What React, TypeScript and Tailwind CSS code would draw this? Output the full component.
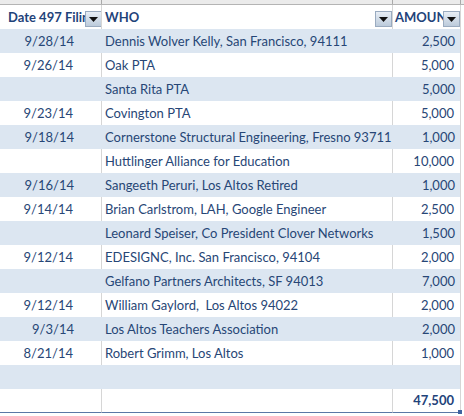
const rows = [
  { date: '9/28/14', who: 'Dennis Wolver Kelly, San Francisco, 94111', amount: '2,500' },
  { date: '9/26/14', who: 'Oak PTA', amount: '5,000' },
  { date: '', who: 'Santa Rita PTA', amount: '5,000' },
  { date: '9/23/14', who: 'Covington PTA', amount: '5,000' },
  { date: '9/18/14', who: 'Cornerstone Structural Engineering, Fresno 93711', amount: '1,000' },
  { date: '', who: 'Huttlinger Alliance for Education', amount: '10,000' },
  { date: '9/16/14', who: 'Sangeeth Peruri, Los Altos Retired', amount: '1,000' },
  { date: '9/14/14', who: 'Brian Carlstrom, LAH, Google Engineer', amount: '2,500' },
  { date: '', who: 'Leonard Speiser, Co President Clover Networks', amount: '1,500' },
  { date: '9/12/14', who: 'EDESIGNC, Inc. San Francisco, 94104', amount: '2,000' },
  { date: '', who: 'Gelfano Partners Architects, SF 94013', amount: '7,000' },
  { date: '9/12/14', who: 'William Gaylord,  Los Altos 94022', amount: '2,000' },
  { date: '9/3/14', who: 'Los Altos Teachers Association', amount: '2,000' },
  { date: '8/21/14', who: 'Robert Grimm, Los Altos', amount: '1,000' },
  { date: '', who: '', amount: '' },
];

const FilterButton = ({ className }: { className: string }) => (
  <div
    className={`absolute top-[6px] w-[17px] h-[16px] border border-[#9aabc0] bg-gradient-to-b from-[#e8eef5] to-[#bccbdb] flex items-center justify-center ${className}`}
  >
    <svg width="9" height="5" viewBox="0 0 9 5">
      <path d="M0 0h9L4.5 5z" fill="#111" />
    </svg>
  </div>
);

const App = () => {
  return (
    <div
      className="w-[464px] h-[416px] overflow-hidden bg-white text-[13px] text-[#274676]"
      style={{ fontFamily: 'Lato, "Open Sans", sans-serif' }}
    >
      {/* column header strip */}
      <div className="grid grid-cols-[102px_291px_68px_1fr] h-[5px] bg-[#ebebeb] border-b border-[#b4b4b4]">
        <div className="border-r border-[#a9a9a9]" />
        <div className="border-r border-[#a9a9a9]" />
        <div className="border-r border-[#a9a9a9]" />
        <div />
      </div>

      {/* table header */}
      <div className="grid grid-cols-[102px_291px_68px_1fr] h-[24px] font-bold text-[#1f437a]">
        <div className="relative border-r border-[#d6d6d6] overflow-hidden whitespace-nowrap pl-[8px] leading-[24px]">
          Date 497 Filing
          <FilterButton className="left-[85px]" />
        </div>
        <div className="relative border-r border-[#d6d6d6] pl-[3px] leading-[24px]">
          WHO
          <FilterButton className="left-[273px]" />
        </div>
        <div className="relative border-r border-[#d6d6d6] overflow-hidden whitespace-nowrap pl-[2px] leading-[24px]">
          AMOUNT
          <FilterButton className="left-[50px]" />
        </div>
        <div />
      </div>

      {/* body */}
      {rows.map((r, i) => {
        const band = i % 2 === 0;
        const cell = band ? 'bg-[#dce6f1]' : 'border-r border-[#d6d6d6]';
        return (
          <div key={i} className="grid grid-cols-[102px_291px_68px_1fr] h-[24px] leading-[24px]">
            <div className={`text-right pr-[28px] ${cell}`}>{r.date}</div>
            <div className={`pl-[3px] whitespace-pre ${cell}`}>{r.who}</div>
            <div className={`text-right pr-[6px] ${cell}`}>{r.amount}</div>
            <div className="border-l border-[#d6d6d6] -ml-px" />
          </div>
        );
      })}

      {/* total row */}
      <div className="grid grid-cols-[102px_291px_68px_1fr] h-[24px] leading-[23px]">
        <div className="border-r border-b border-r-[#d6d6d6] border-b-[#5a78a6]" />
        <div className="border-r border-b border-r-[#d6d6d6] border-b-[#5a78a6]" />
        <div className="relative text-right pr-[6px] font-bold text-[#1f437a] border-r border-b border-r-[#d6d6d6] border-b-[#5a78a6]">
          47,500
          <div className="absolute right-[-2px] bottom-[-2px] w-[4px] h-[4px] bg-[#3f63a0]" />
        </div>
        <div />
      </div>
    </div>
  );
};

export default App;
